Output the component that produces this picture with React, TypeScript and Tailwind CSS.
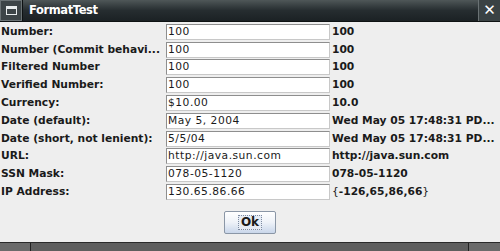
import React from 'react';

const rows: { label: string; field: string; value: React.ReactNode }[] = [
  { label: 'Number:', field: '100', value: '100' },
  { label: 'Number (Commit behavi...', field: '100', value: '100' },
  { label: 'Filtered Number', field: '100', value: '100' },
  { label: 'Verified Number:', field: '100', value: '100' },
  { label: 'Currency:', field: '$10.00', value: '10.0' },
  { label: 'Date (default):', field: 'May 5, 2004', value: 'Wed May 05 17:48:31 PD...' },
  { label: 'Date (short, not lenient):', field: '5/5/04', value: 'Wed May 05 17:48:31 PD...' },
  { label: 'URL:', field: 'http://java.sun.com', value: 'http://java.sun.com' },
  { label: 'SSN Mask:', field: '078-05-1120', value: '078-05-1120' },
  {
    label: 'IP Address:',
    field: '130.65.86.66',
    value: (
      <>
        <span className="font-normal">{'{'}</span>-126,65,86,66<span className="font-normal">{'}'}</span>
      </>
    ),
  },
];

export default function App() {
  return (
    <div className="w-[500px] h-[251px] flex flex-col bg-[#eeeeee] overflow-hidden font-['DejaVu_Sans',sans-serif] text-[10.7px] text-[#1a1a1a]">
      {/* title bar */}
      <div className="h-[22px] flex items-stretch bg-gradient-to-b from-[#4f5758] via-[#262d30] to-[#1b2124] border-b border-[#0e1213]">
        <div className="w-[22px] flex items-center justify-center bg-[#3d4547] border border-[#6a7274]">
          <div className="w-[11px] h-[9px] border-[1.5px] border-t-[3px] border-[#e8ecec]" />
        </div>
        <div className="w-[1px] bg-[#0d1112]" />
        <div className="flex-1 flex items-center pl-[6px] text-white font-bold text-[11.5px] tracking-[-0.4px]">FormatTest</div>
        <div className="w-[22px] flex items-center justify-center bg-[#3a4244] border-l border-[#6a7274] text-white font-bold text-[15px] leading-none">
          ✕
        </div>
      </div>

      {/* form */}
      <div className="flex flex-col pt-[1px]">
        {rows.map((r) => (
          <div key={r.label} className="h-[17.8px] flex items-center">
            <div className="w-[166px] pl-[1px] font-bold whitespace-nowrap overflow-hidden">{r.label}</div>
            <div className="w-[164px] h-[16px] flex items-center bg-white border border-[#8e8e8e] border-r-[#c8c8c8] border-b-[#c8c8c8] pl-[1px] tracking-[0.5px] whitespace-nowrap overflow-hidden">
              {r.field}
            </div>
            <div className="flex-1 pl-[2px] font-bold whitespace-nowrap overflow-hidden">{r.value}</div>
          </div>
        ))}
      </div>

      {/* button */}
      <div className="flex justify-center pt-[10px]">
        <div className="w-[52px] h-[23px] flex items-center justify-center rounded-[2px] border border-[#8a96a6] bg-gradient-to-b from-[#ffffff] via-[#eef2f8] to-[#c9d6ea]">
          <span className="px-[2px] border border-dotted border-[#7d8aa0] bg-[#e6ecf5] font-bold text-[12px] leading-[13px]">Ok</span>
        </div>
      </div>

      <div className="flex-1" />

      {/* bottom frame */}
      <div className="h-[1px] bg-[#2a2a2a]" />
      <div className="h-[8px] flex bg-[#6b6b6b]">
        <div className="w-[30px]" />
        <div className="w-[1px] bg-[#222]" />
        <div className="flex-1 bg-[#5e5e5e]" />
        <div className="w-[1px] bg-[#222]" />
        <div className="w-[31px]" />
      </div>
    </div>
  );
}
